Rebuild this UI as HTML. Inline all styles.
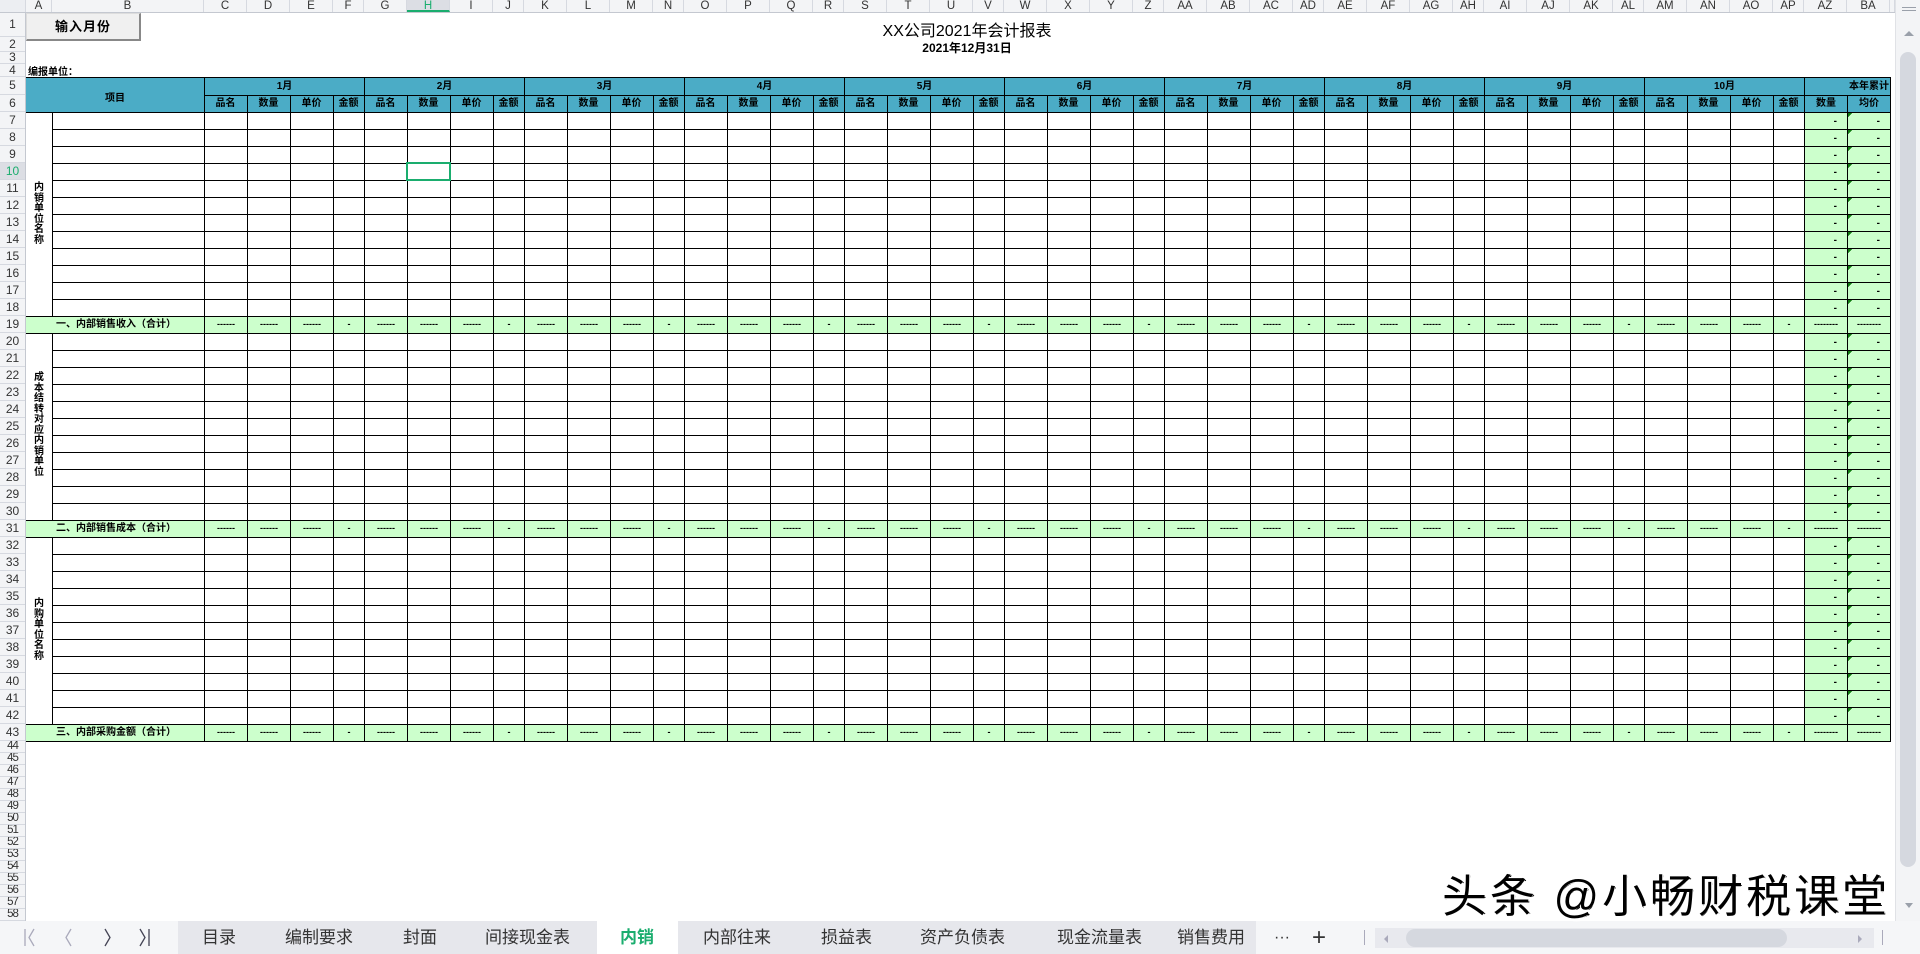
<!DOCTYPE html>
<html><head><meta charset="utf-8">
<style>
*{margin:0;padding:0;box-sizing:border-box}
body{width:1920px;height:954px;overflow:hidden;background:#fff;position:relative;font-family:"Liberation Sans","Noto Sans CJK SC",sans-serif;color:#000}
.abs{position:absolute}
#colh{left:0;top:0;width:1895px;height:13px;background:#f3f4f6;border-bottom:1px solid #c4c8d0;display:flex;font-size:11.5px;color:#333;line-height:13px}
#colh span{text-align:center;border-right:1px solid #d6d9e0;flex:none}
.w43{width:43px}.w31{width:31px}
#rowh{left:0;top:13px;width:26px;background:#f3f4f6;border-right:1px solid #c4c8d0;font-size:12px;color:#333;text-align:center}
#rowh div{border-bottom:1px solid #d6d9e0;overflow:hidden}
.r17{height:17px;line-height:16px}
.r12{height:12px;line-height:11px;font-size:11.5px;letter-spacing:-1px}
.vlines{background:linear-gradient(to right,#000 0 1px,transparent 1px 43px,#000 43px 44px,transparent 44px 86px,#000 86px 87px,transparent 87px 129px,#000 129px 130px,transparent 130px 160px) 0 0/160px 100% repeat-x}
.hlines{background:repeating-linear-gradient(to bottom,#000 0 1px,transparent 1px 17px)}
.teal{background:#4bacc6}
.hdr{font-size:10px;font-weight:bold;text-align:center}
.tot{height:18px;background:#ccffcc;border-top:1px solid #000;border-bottom:1px solid #000;left:26px;width:1865px}
.tot .lbl{position:absolute;left:30px;top:0;font-size:10px;font-weight:bold;line-height:16px}
.tot .cells{position:absolute;left:178px;top:0;display:flex;font-size:9px;line-height:15px;font-weight:bold}
.tot .cells i{font-style:normal;width:43px;text-align:center;border-left:1px solid #000;height:16px}
.tot .cells b{width:31px;text-align:center;border-left:1px solid #000;height:16px}
.vt{font-size:10px;font-weight:bold;line-height:10.5px;width:26px;text-align:center;left:26px}
.dash{font-size:10px;line-height:17px;text-align:right;padding-right:10px;font-weight:bold}
.tab{position:absolute;top:921px;height:33px;line-height:33px;font-size:17px;color:#333}
</style></head><body>

<div id="colh" class="abs">
<span style="width:26px;background:#eceef2"></span><span style="width:26px">A</span><span style="width:152px">B</span>
<span class="w43">C</span><span class="w43">D</span><span class="w43">E</span><span class="w31">F</span>
<span class="w43">G</span><span class="w43" style="background:#dcdee4;color:#1aad6e;border-bottom:2px solid #1aad6e">H</span><span class="w43">I</span><span class="w31">J</span>
<span class="w43">K</span><span class="w43">L</span><span class="w43">M</span><span class="w31">N</span>
<span class="w43">O</span><span class="w43">P</span><span class="w43">Q</span><span class="w31">R</span>
<span class="w43">S</span><span class="w43">T</span><span class="w43">U</span><span class="w31">V</span>
<span class="w43">W</span><span class="w43">X</span><span class="w43">Y</span><span class="w31">Z</span>
<span class="w43">AA</span><span class="w43">AB</span><span class="w43">AC</span><span class="w31">AD</span>
<span class="w43">AE</span><span class="w43">AF</span><span class="w43">AG</span><span class="w31">AH</span>
<span class="w43">AI</span><span class="w43">AJ</span><span class="w43">AK</span><span class="w31">AL</span>
<span class="w43">AM</span><span class="w43">AN</span><span class="w43">AO</span><span class="w31">AP</span>
<span class="w43">AZ</span><span class="w43">BA</span><span style="width:5px"></span>
</div>

<div id="rowh" class="abs">
<div style="height:24px;line-height:23px">1</div><div style="height:15px;line-height:14px">2</div><div style="height:12px;line-height:11px">3</div><div style="height:13px;line-height:12px">4</div><div style="height:18px;line-height:17px">5</div><div class="r17">6</div>
<div class="r17">7</div><div class="r17">8</div><div class="r17">9</div><div class="r17" style="background:#dcdee4;color:#1aad6e">10</div><div class="r17">11</div><div class="r17">12</div><div class="r17">13</div><div class="r17">14</div><div class="r17">15</div><div class="r17">16</div><div class="r17">17</div><div class="r17">18</div><div class="r17">19</div><div class="r17">20</div><div class="r17">21</div><div class="r17">22</div><div class="r17">23</div><div class="r17">24</div><div class="r17">25</div><div class="r17">26</div><div class="r17">27</div><div class="r17">28</div><div class="r17">29</div><div class="r17">30</div><div class="r17">31</div><div class="r17">32</div><div class="r17">33</div><div class="r17">34</div><div class="r17">35</div><div class="r17">36</div><div class="r17">37</div><div class="r17">38</div><div class="r17">39</div><div class="r17">40</div><div class="r17">41</div><div class="r17">42</div><div class="r17">43</div>
<div class="r12">44</div><div class="r12">45</div><div class="r12">46</div><div class="r12">47</div><div class="r12">48</div><div class="r12">49</div><div class="r12">50</div><div class="r12">51</div><div class="r12">52</div><div class="r12">53</div><div class="r12">54</div><div class="r12">55</div><div class="r12">56</div><div class="r12">57</div><div class="r12">58</div>
</div>

<div class="abs" style="left:26px;top:13px;width:115px;height:28px;background:#f0f0f0;border:1px solid #ddd;border-right:2px solid #888;border-bottom:2px solid #888;font-size:13px;font-weight:bold;text-align:center;line-height:25px;letter-spacing:1px">输入月份</div>

<div class="abs" style="left:767px;width:400px;top:17px;text-align:center;font-size:16px">XX公司2021年会计报表</div>
<div class="abs" style="left:767px;width:400px;top:39px;text-align:center;font-size:12px;font-weight:bold">2021年12月31日</div>
<div class="abs" style="left:28px;top:63px;font-size:10px;font-weight:bold">编报单位：</div>

<div class="abs teal" style="left:26px;top:77px;width:1865px;height:36px;border-top:1px solid #000;border-bottom:1px solid #000"></div>
<div class="abs hdr" style="left:26px;top:89px;width:178px">项目</div>
<div class="abs vlines" style="left:204px;top:95px;width:1600px;height:17px"></div>
<div class="abs" style="left:204px;top:95px;width:1687px;height:1px;background:#000"></div>
<div class="abs hdr" style="left:204px;top:78px;display:flex;line-height:17px">
<span style="width:160px;border-left:1px solid #000">1月</span><span style="width:160px;border-left:1px solid #000">2月</span><span style="width:160px;border-left:1px solid #000">3月</span><span style="width:160px;border-left:1px solid #000">4月</span><span style="width:160px;border-left:1px solid #000">5月</span><span style="width:160px;border-left:1px solid #000">6月</span><span style="width:160px;border-left:1px solid #000">7月</span><span style="width:160px;border-left:1px solid #000">8月</span><span style="width:160px;border-left:1px solid #000">9月</span><span style="width:160px;border-left:1px solid #000">10月</span><span style="width:87px;border-left:1px solid #000;text-align:right;padding-right:2px">本年累计</span>
</div>
<div class="abs hdr" style="left:204px;top:96px;display:flex;line-height:16px">
<span class="w43">品名</span><span class="w43">数量</span><span class="w43">单价</span><span class="w31">金额</span>
<span class="w43">品名</span><span class="w43">数量</span><span class="w43">单价</span><span class="w31">金额</span>
<span class="w43">品名</span><span class="w43">数量</span><span class="w43">单价</span><span class="w31">金额</span>
<span class="w43">品名</span><span class="w43">数量</span><span class="w43">单价</span><span class="w31">金额</span>
<span class="w43">品名</span><span class="w43">数量</span><span class="w43">单价</span><span class="w31">金额</span>
<span class="w43">品名</span><span class="w43">数量</span><span class="w43">单价</span><span class="w31">金额</span>
<span class="w43">品名</span><span class="w43">数量</span><span class="w43">单价</span><span class="w31">金额</span>
<span class="w43">品名</span><span class="w43">数量</span><span class="w43">单价</span><span class="w31">金额</span>
<span class="w43">品名</span><span class="w43">数量</span><span class="w43">单价</span><span class="w31">金额</span>
<span class="w43">品名</span><span class="w43">数量</span><span class="w43">单价</span><span class="w31">金额</span>
<span class="w43" style="border-left:1px solid #000">数量</span><span class="w43" style="border-left:1px solid #000">均价</span>
</div>
<div class="abs" style="left:1804px;top:77px;width:1px;height:35px;background:#000"></div>
<div class="abs" style="left:1847px;top:95px;width:1px;height:17px;background:#000"></div>
<div class="abs" style="left:1890px;top:77px;width:1px;height:35px;background:#000"></div>

<div class="abs hlines" style="left:52px;top:112px;width:1839px;height:630px"></div>
<div class="abs vlines" style="left:204px;top:112px;width:1600px;height:612px"></div>
<div class="abs" style="left:52px;top:112px;width:1px;height:612px;background:#000"></div>
<div class="abs" style="left:1804px;top:112px;width:87px;height:612px;background:#ccffcc"></div>
<div class="abs hlines" style="left:1804px;top:112px;width:87px;height:630px"></div>
<div class="abs" style="left:1804px;top:112px;width:1px;height:612px;background:#000"></div>
<div class="abs" style="left:1847px;top:112px;width:1px;height:612px;background:#000"></div>
<div class="abs" style="left:1890px;top:112px;width:1px;height:630px;background:#000"></div>
<div class="abs" style="left:1848px;top:113px;width:10px;height:611px;background:linear-gradient(135deg,#107c10 0 3px,transparent 3px) 0 0/6px 17px repeat-y"></div>

<div class="abs dash" style="left:1805px;top:113px;width:42px">-<br>-<br>-<br>-<br>-<br>-<br>-<br>-<br>-<br>-<br>-<br>-<br><br>-<br>-<br>-<br>-<br>-<br>-<br>-<br>-<br>-<br>-<br>-<br><br>-<br>-<br>-<br>-<br>-<br>-<br>-<br>-<br>-<br>-<br>-</div>
<div class="abs dash" style="left:1848px;top:113px;width:42px">-<br>-<br>-<br>-<br>-<br>-<br>-<br>-<br>-<br>-<br>-<br>-<br><br>-<br>-<br>-<br>-<br>-<br>-<br>-<br>-<br>-<br>-<br>-<br><br>-<br>-<br>-<br>-<br>-<br>-<br>-<br>-<br>-<br>-<br>-</div>

<div class="abs vt" style="top:183px">内<br>销<br>单<br>位<br>名<br>称</div>
<div class="abs vt" style="top:373px">成<br>本<br>结<br>转<br>对<br>应<br>内<br>销<br>单<br>位</div>
<div class="abs vt" style="top:599px">内<br>购<br>单<br>位<br>名<br>称</div>

<div class="abs tot" style="top:316px"><span class="lbl">一、内部销售收入（合计）</span><div class="cells">
<i>------</i><i>------</i><i>------</i><b>-</b><i>------</i><i>------</i><i>------</i><b>-</b><i>------</i><i>------</i><i>------</i><b>-</b><i>------</i><i>------</i><i>------</i><b>-</b><i>------</i><i>------</i><i>------</i><b>-</b><i>------</i><i>------</i><i>------</i><b>-</b><i>------</i><i>------</i><i>------</i><b>-</b><i>------</i><i>------</i><i>------</i><b>-</b><i>------</i><i>------</i><i>------</i><b>-</b><i>------</i><i>------</i><i>------</i><b>-</b><i>--------</i><i>--------</i><i style="width:1px"></i></div></div>
<div class="abs tot" style="top:520px"><span class="lbl">二、内部销售成本（合计）</span><div class="cells">
<i>------</i><i>------</i><i>------</i><b>-</b><i>------</i><i>------</i><i>------</i><b>-</b><i>------</i><i>------</i><i>------</i><b>-</b><i>------</i><i>------</i><i>------</i><b>-</b><i>------</i><i>------</i><i>------</i><b>-</b><i>------</i><i>------</i><i>------</i><b>-</b><i>------</i><i>------</i><i>------</i><b>-</b><i>------</i><i>------</i><i>------</i><b>-</b><i>------</i><i>------</i><i>------</i><b>-</b><i>------</i><i>------</i><i>------</i><b>-</b><i>--------</i><i>--------</i><i style="width:1px"></i></div></div>
<div class="abs tot" style="top:724px"><span class="lbl">三、内部采购金额（合计）</span><div class="cells">
<i>------</i><i>------</i><i>------</i><b>-</b><i>------</i><i>------</i><i>------</i><b>-</b><i>------</i><i>------</i><i>------</i><b>-</b><i>------</i><i>------</i><i>------</i><b>-</b><i>------</i><i>------</i><i>------</i><b>-</b><i>------</i><i>------</i><i>------</i><b>-</b><i>------</i><i>------</i><i>------</i><b>-</b><i>------</i><i>------</i><i>------</i><b>-</b><i>------</i><i>------</i><i>------</i><b>-</b><i>------</i><i>------</i><i>------</i><b>-</b><i>--------</i><i>--------</i><i style="width:1px"></i></div></div>

<div class="abs" style="left:406px;top:162px;width:45px;height:19px;border:2px solid #1aad6e"></div>

<div class="abs" style="left:1895px;top:0;width:25px;height:921px;background:#f3f4f6;border-left:1px solid #e0e2e6"></div>
<div class="abs" style="left:1902px;top:7px;width:14px;height:1px;background:#9aa0aa;box-shadow:0 3px 0 #9aa0aa"></div>
<div class="abs" style="left:1904px;top:31px;width:0;height:0;border-left:5px solid transparent;border-right:5px solid transparent;border-bottom:5px solid #9aa0aa"></div>
<div class="abs" style="left:1900px;top:52px;width:16px;height:815px;background:#d5d8df;border-radius:8px"></div>
<div class="abs" style="left:1905px;top:903px;width:0;height:0;border-left:4px solid transparent;border-right:4px solid transparent;border-top:5px solid #9aa0aa"></div>

<div class="abs" style="left:1442px;top:872px;font-size:45px;line-height:50px;letter-spacing:3px;color:#000;white-space:nowrap;text-shadow:2px 3px 0 #fff,-1px -1px 0 #fff,1px -1px 0 #fff,-1px 1px 0 #fff,1px 1px 0 #000;z-index:5">头条 @小畅财税课堂</div>

<div class="abs" style="left:0;top:921px;width:1920px;height:33px;background:#f5f6f8"></div>
<div class="abs" style="left:178px;top:921px;width:1078px;height:33px;background:#e6e7ec"></div>
<div class="abs" style="left:597px;top:921px;width:81px;height:33px;background:#fff"></div>
<svg class="abs" style="left:0;top:921px" width="178" height="33" viewBox="0 0 178 33">
<g fill="none" stroke-width="1.3">
<path d="M25 8v17M34 8l-5 8.5 5 8.5" stroke="#aab"/>
<path d="M71 8l-5 8.5 5 8.5" stroke="#aab"/>
<path d="M105 8l5 8.5-5 8.5" stroke="#445"/>
<path d="M140 8l5 8.5-5 8.5M149 8v17" stroke="#445"/>
</g></svg>
<div class="tab" style="left:202px">目录</div>
<div class="tab" style="left:285px">编制要求</div>
<div class="tab" style="left:403px">封面</div>
<div class="tab" style="left:485px">间接现金表</div>
<div class="tab" style="left:620px;color:#1aad6e;font-weight:bold">内销</div>
<div class="tab" style="left:703px">内部往来</div>
<div class="tab" style="left:821px">损益表</div>
<div class="tab" style="left:920px">资产负债表</div>
<div class="tab" style="left:1057px">现金流量表</div>
<div class="tab" style="left:1177px">销售费用</div>
<div class="tab" style="left:1274px;font-size:16px">···</div>
<div class="tab" style="left:1312px;font-size:24px;font-weight:300">+</div>
<div class="abs" style="left:1364px;top:930px;width:1px;height:15px;background:#aab"></div>
<div class="abs" style="left:1375px;top:928px;width:499px;height:20px;background:#e8e9ee"></div>
<div class="abs" style="left:1406px;top:929px;width:381px;height:18px;background:#d5d8df;border-radius:9px"></div>
<div class="abs" style="left:1384px;top:935px;border-top:4px solid transparent;border-bottom:4px solid transparent;border-right:4px solid #aab"></div>
<div class="abs" style="left:1858px;top:935px;border-top:4px solid transparent;border-bottom:4px solid transparent;border-left:4px solid #aab"></div>
<div class="abs" style="left:1882px;top:930px;width:1px;height:15px;background:#aab"></div>
</body></html>
